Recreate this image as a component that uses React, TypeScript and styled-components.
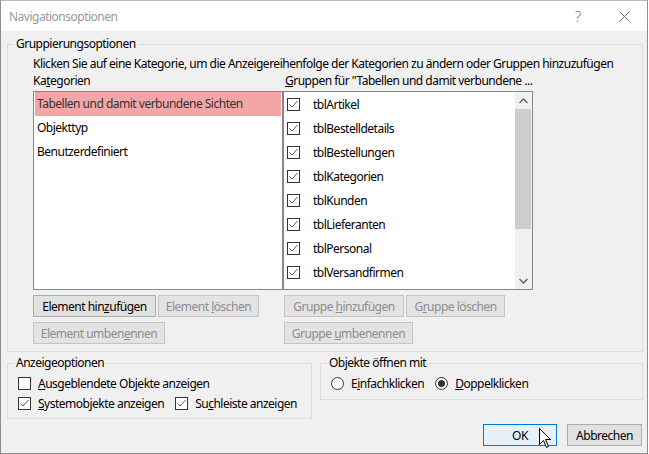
import styled, { createGlobalStyle } from "styled-components";

const GlobalStyle = createGlobalStyle`
    html, body {
        margin: 0;
        padding: 0;
        background: #fff;
    }
    body {
        font-family: "Noto Sans", "Segoe UI", sans-serif;
        font-size: 12px;
        color: #000;
    }
    * {
        box-sizing: border-box;
    }
`;

const Window = styled.div`
    position: relative;
    width: 648px;
    height: 454px;
    display: flex;
    flex-direction: column;
    background-color: #f0f0f0;
    border: 1px solid #8e8e8e;
    border-top-color: #b9b9b9;
    letter-spacing: -0.5px;
`;

const TitleBar = styled.div`
    height: 30px;
    display: flex;
    align-items: center;
    background-color: #fff;
`;
const TitleText = styled.div`
    flex: 1;
    padding-left: 8px;
    color: #999;
`;
const TitleButton = styled.div`
    width: 46px;
    height: 30px;
    display: flex;
    align-items: center;
    justify-content: center;
    color: #808080;
    font-size: 15px;
    font-weight: 300;
`;

const Body = styled.div`
    display: flex;
    flex-direction: column;
    padding: 0 4px 0 6px;
`;

const Group = styled.fieldset<{ $width?: number }>`
    margin: 0;
    padding: 0;
    min-width: 0;
    width: ${(p) => (p.$width ? `${p.$width}px` : "auto")};
    border: 1px solid #dcdcdc;
`;
const GroupTitle = styled.legend`
    margin-left: 6px;
    padding: 0 2px;
    height: 16px;
    line-height: 16px;
`;

const MainGroup = styled(Group)`
    margin-top: 5px;
`;
const MainContent = styled.div`
    padding: 4px 0 7px 25px;
`;
const Intro = styled.div`
    height: 16px;
    line-height: 16px;
    white-space: nowrap;
`;

const TwoColumns = styled.div`
    display: grid;
    grid-template-columns: 250px 250px;
`;
const ColumnHead = styled.div<{ $inset?: number }>`
    height: 17px;
    line-height: 17px;
    margin-bottom: 2px;
    padding-left: ${(p) => p.$inset ?? 0}px;
    white-space: nowrap;
`;

const ListBox = styled.div`
    height: 199px;
    background-color: #fff;
    border: 1px solid #828790;
    overflow: hidden;
`;
const CategoryList = styled(ListBox)`
    padding: 0 1px;
`;
const CategoryItem = styled.div<{ $selected?: boolean }>`
    height: 24px;
    line-height: 24px;
    padding-left: 2px;
    background-color: ${(p) => (p.$selected ? "#f4a6a6" : "transparent")};
    color: ${(p) => (p.$selected ? "#333" : "#000")};
`;

const GroupList = styled(ListBox)`
    display: flex;
`;
const GroupItems = styled.div`
    flex: 1;
`;
const GroupItem = styled.div`
    height: 24px;
    display: flex;
    align-items: center;
    gap: 13px;
    padding-left: 3px;
`;

const ScrollBar = styled.div`
    width: 17px;
    display: flex;
    flex-direction: column;
    background-color: #f0f0f0;
`;
const ScrollArrow = styled.div`
    height: 17px;
    display: flex;
    align-items: center;
    justify-content: center;
`;
const ScrollTrack = styled.div`
    flex: 1;
`;
const ScrollThumb = styled.div`
    height: 120px;
    margin-right: 1px;
    background-color: #cdcdcd;
`;

const ButtonGrid = styled(TwoColumns)`
    margin-top: 5px;
    row-gap: 5px;
`;
const ButtonCell = styled.div<{ $inset?: number }>`
    display: flex;
    gap: 2px;
    padding-left: ${(p) => p.$inset ?? 0}px;
`;
const Button = styled.button<{ $width: number; $primary?: boolean }>`
    width: ${(p) => p.$width}px;
    height: 22px;
    padding: 0;
    font: inherit;
    letter-spacing: inherit;
    color: #000;
    background-color: ${(p) => (p.$primary ? "#e5f1fb" : "#e1e1e1")};
    border: 1px solid ${(p) => (p.$primary ? "#0078d7" : "#adadad")};

    &:disabled {
        color: #8d8d8d;
        background-color: #e3e3e3;
        border-color: #c4c4c4;
    }
`;

const LowerRow = styled.div`
    display: flex;
    align-items: flex-start;
    gap: 8px;
    margin-top: 3px;
`;
const OptionContent = styled.div<{ $bottom: number }>`
    padding: 2px 0 ${(p) => p.$bottom}px 10px;
`;
const OptionRow = styled.div<{ $gap: number }>`
    height: 20px;
    display: flex;
    align-items: center;
    gap: ${(p) => p.$gap}px;
`;
const Option = styled.label`
    display: flex;
    align-items: center;
    gap: 7px;
    white-space: nowrap;
`;

const Box = styled.span`
    width: 13px;
    height: 13px;
    flex: none;
    display: flex;
    align-items: center;
    justify-content: center;
    background-color: #fff;
    border: 1px solid #333;
`;
const Round = styled(Box)`
    border-radius: 50%;
`;
const Dot = styled.span`
    width: 7px;
    height: 7px;
    border-radius: 50%;
    background-color: #333;
`;

const Footer = styled.div`
    display: flex;
    justify-content: flex-end;
    gap: 10px;
    margin-top: 5px;
    margin-right: 1px;
`;

const Cursor = styled.svg`
    position: absolute;
    left: 538px;
    top: 427px;
`;

function CheckBox({ checked }: { checked?: boolean }) {
    return (
        <Box>
            {checked && (
                <svg width="11" height="11" viewBox="0 0 11 11">
                    <path d="M1.5 5.5 L4 8 L9.5 2" fill="none" stroke="#555" strokeWidth="1" />
                </svg>
            )}
        </Box>
    );
}

function Radio({ checked }: { checked?: boolean }) {
    return <Round>{checked && <Dot />}</Round>;
}

const groups = [
    "tblArtikel",
    "tblBestelldetails",
    "tblBestellungen",
    "tblKategorien",
    "tblKunden",
    "tblLieferanten",
    "tblPersonal",
    "tblVersandfirmen",
];

function App() {
    return (
        <>
            <GlobalStyle />
            <Window>
                <TitleBar>
                    <TitleText>Navigationsoptionen</TitleText>
                    <TitleButton>?</TitleButton>
                    <TitleButton>
                        <svg width="11" height="11" viewBox="0 0 11 11">
                            <path d="M0.5 0.5 L10.5 10.5 M10.5 0.5 L0.5 10.5" stroke="#707070" strokeWidth="1" />
                        </svg>
                    </TitleButton>
                </TitleBar>
                <Body>
                    <MainGroup>
                        <GroupTitle>Gruppierungsoptionen</GroupTitle>
                        <MainContent>
                            <Intro>
                                Klicken Sie auf eine Kategorie, um die Anzeigereihenfolge der Kategorien zu
                                ändern oder Gruppen hinzuzufügen
                            </Intro>
                            <TwoColumns>
                                <ColumnHead>
                                    Ka<u>t</u>egorien
                                </ColumnHead>
                                <ColumnHead $inset={2}>
                                    <u>G</u>ruppen für "Tabellen und damit verbundene ...
                                </ColumnHead>
                                <CategoryList>
                                    <CategoryItem $selected>Tabellen und damit verbundene Sichten</CategoryItem>
                                    <CategoryItem>Objekttyp</CategoryItem>
                                    <CategoryItem>Benutzerdefiniert</CategoryItem>
                                </CategoryList>
                                <GroupList>
                                    <GroupItems>
                                        {groups.map((g) => (
                                            <GroupItem key={g}>
                                                <CheckBox checked />
                                                {g}
                                            </GroupItem>
                                        ))}
                                    </GroupItems>
                                    <ScrollBar>
                                        <ScrollArrow>
                                            <svg width="9" height="6" viewBox="0 0 9 6">
                                                <path d="M0.5 5 L4.5 1 L8.5 5" fill="none" stroke="#606060" strokeWidth="1.4" />
                                            </svg>
                                        </ScrollArrow>
                                        <ScrollTrack>
                                            <ScrollThumb />
                                        </ScrollTrack>
                                        <ScrollArrow>
                                            <svg width="9" height="6" viewBox="0 0 9 6">
                                                <path d="M0.5 1 L4.5 5 L8.5 1" fill="none" stroke="#606060" strokeWidth="1.4" />
                                            </svg>
                                        </ScrollArrow>
                                    </ScrollBar>
                                </GroupList>
                            </TwoColumns>
                            <ButtonGrid>
                                <ButtonCell>
                                    <Button $width={123}>
                                        Element hin<u>z</u>ufügen
                                    </Button>
                                    <Button $width={101} disabled>
                                        Element <u>l</u>öschen
                                    </Button>
                                </ButtonCell>
                                <ButtonCell $inset={1}>
                                    <Button $width={120} disabled>
                                        Gruppe <u>h</u>inzufügen
                                    </Button>
                                    <Button $width={99} disabled>
                                        G<u>r</u>uppe löschen
                                    </Button>
                                </ButtonCell>
                                <ButtonCell>
                                    <Button $width={132} disabled>
                                        Element umben<u>e</u>nnen
                                    </Button>
                                </ButtonCell>
                                <ButtonCell $inset={1}>
                                    <Button $width={129} disabled>
                                        Gruppe <u>u</u>mbenennen
                                    </Button>
                                </ButtonCell>
                            </ButtonGrid>
                        </MainContent>
                    </MainGroup>
                    <LowerRow>
                        <Group $width={305}>
                            <GroupTitle>Anzeigeoptionen</GroupTitle>
                            <OptionContent $bottom={5}>
                                <OptionRow $gap={11}>
                                    <Option>
                                        <CheckBox />
                                        <span>
                                            <u>A</u>usgeblendete Objekte anzeigen
                                        </span>
                                    </Option>
                                </OptionRow>
                                <OptionRow $gap={11}>
                                    <Option>
                                        <CheckBox checked />
                                        <span>
                                            <u>S</u>ystemobjekte anzeigen
                                        </span>
                                    </Option>
                                    <Option>
                                        <CheckBox checked />
                                        <span>
                                            Su<u>c</u>hleiste anzeigen
                                        </span>
                                    </Option>
                                </OptionRow>
                            </OptionContent>
                        </Group>
                        <Group $width={323}>
                            <GroupTitle>Objekte öffnen mit</GroupTitle>
                            <OptionContent $bottom={6}>
                                <OptionRow $gap={11}>
                                    <Option>
                                        <Radio />
                                        <span>
                                            E<u>i</u>nfachklicken
                                        </span>
                                    </Option>
                                    <Option>
                                        <Radio checked />
                                        <span>
                                            <u>D</u>oppelklicken
                                        </span>
                                    </Option>
                                </OptionRow>
                            </OptionContent>
                        </Group>
                    </LowerRow>
                    <Footer>
                        <Button $width={74} $primary>
                            OK
                        </Button>
                        <Button $width={75}>Abbrechen</Button>
                    </Footer>
                </Body>
                <Cursor width="13" height="21" viewBox="0 0 13 21">
                    <path
                        d="M0.5 0.5 L0.5 16.5 L4.5 12.5 L7.5 19.5 L9.5 18.5 L6.5 11.5 L11.5 11.5 Z"
                        fill="#fff"
                        stroke="#000"
                        strokeWidth="1"
                    />
                </Cursor>
            </Window>
        </>
    );
}

export default App;
